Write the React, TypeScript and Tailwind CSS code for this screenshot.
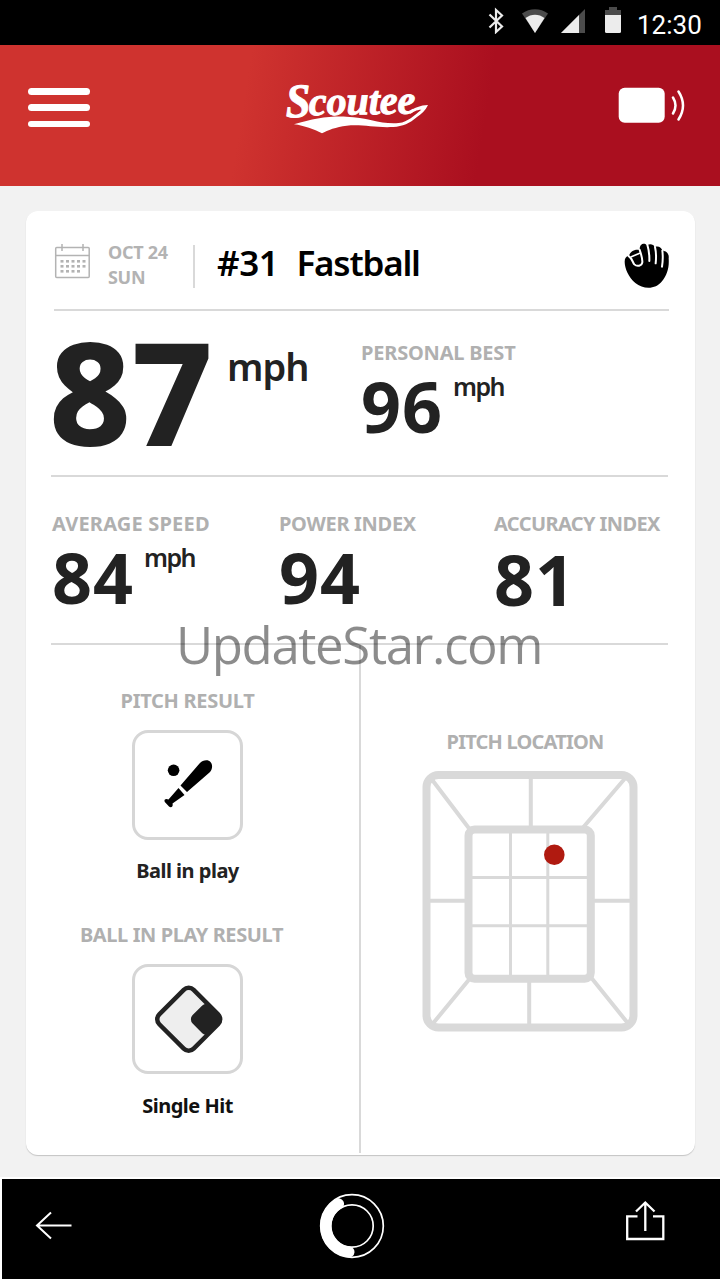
import type { ReactNode } from "react";

function StatusBar() {
  return (
    <div className="flex h-[45px] items-start bg-black pl-[488px] text-white">
      <svg className="mt-[7px]" width="134" height="27" viewBox="488 7 134 27">
        <path
          d="M489.500 14.500l12.500 12-6 5.500v-22l6 5.500-12.500 12"
          fill="none"
          stroke="#ececec"
          strokeWidth="2.200"
        />
        <path d="M522 13.500c7.500-5.700 18.500-5.700 26 0L535 33z" fill="#4b4b4b" />
        <path d="M525.500 18c5.500-4.500 13.500-4.500 19 0L535 33z" fill="#ececec" />
        <path d="M585 9v24h-24z" fill="#4b4b4b" />
        <path d="M579 15v18h-18z" fill="#ececec" />
        <path d="M605 15v-5h4V7h8v3h4v5z" fill="#4b4b4b" />
        <path d="M605 15h16v16.500q0 1.500-1.500 1.500h-13q-1.500 0-1.500-1.500z" fill="#ececec" />
      </svg>
      <span className="ml-[15px] mt-3 font-['Roboto'] text-[26px] leading-[26px]">
        12:30
      </span>
    </div>
  );
}

function Logo() {
  return (
    <svg width="157" height="67" viewBox="115 15 471 201" fill="#fff">
      <g
        fontFamily="'Liberation Serif', serif"
        fontStyle="italic"
        fontWeight="700"
        stroke="#fff"
        strokeWidth="3"
        transform="rotate(-1 140 140)"
      >
        <text x="139" y="142" fontSize="144" textLength="74" lengthAdjust="spacingAndGlyphs">
          S
        </text>
        <text x="208" y="137" fontSize="122" textLength="320" lengthAdjust="spacingAndGlyphs">
          coutee
        </text>
      </g>
      <path d="M163 163C220 146 265 138 320 140C385 142 425 164 477 159C506 155 522 137 545 119C530 119 520 126 512 132L510 124C525 113 542 106 565 105C558 121 545 132 531 142C511 160 489 170 461 171C405 174 369 162 321 167C289 171 264 180 247 190C222 178 195 167 163 163Z" />
    </svg>
  );
}

function Header() {
  return (
    <header className="flex h-[141px] items-start bg-[linear-gradient(99deg,#cf332f_34%,#aa0f1f_67%)] pl-7">
      <div className="mt-[43px] flex w-[62px] flex-col gap-[9.5px]">
        <div className="h-[6.8px] rounded-full bg-white" />
        <div className="h-[6.8px] rounded-full bg-white" />
        <div className="h-[6.8px] rounded-full bg-white" />
      </div>
      <div className="ml-[188px] mt-[30px]">
        <Logo />
      </div>
      <svg className="ml-[183px] mt-[41px]" width="68" height="38" viewBox="618 86 68 38">
        <rect x="618.700" y="87.700" width="46" height="35" rx="6" fill="#fff" />
        <path
          d="M673 97.500q5 8 0 16M678.500 91.500q9 14 0 28"
          fill="none"
          stroke="#fff"
          strokeWidth="2.500"
          strokeLinecap="round"
        />
      </svg>
    </header>
  );
}

function CalendarIcon() {
  const dots = [
    [61, 261], [66.5, 261], [72, 261], [77.5, 261], [83, 261],
    [61, 266], [66.5, 266], [72, 266], [77.5, 266], [83, 266],
    [61, 271], [66.5, 271], [72, 271], [77.5, 271],
  ];
  return (
    <svg width="37" height="36" viewBox="54 243 37 36" fill="none" stroke="#b3b3b3">
      <rect x="55.700" y="247.500" width="33.500" height="30" rx="1" strokeWidth="1.500" />
      <path d="M55.500 255.500h34M62 244v7M83 244v7" strokeWidth="1.500" />
      {dots.map(([x, y]) => (
        <rect key={`${x}-${y}`} x={x - 0.5} y={y - 1} width="3" height="2.600" fill="#b3b3b3" stroke="none" />
      ))}
    </svg>
  );
}

function GloveIcon() {
  return (
    <svg width="46" height="46" viewBox="20 18 138 138">
      <path
        d="M22 74C22 63 27 57 35 58C37 45 50 36 67 39C66 17 84 17 89 25C98 19 109 22 112 30C124 26 133 32 135 41C148 41 156 51 154 64C156 92 149 114 134 133C115 158 78 158 54 138C34 121 22 94 22 74Z"
        fill="#000"
      />
      <g fill="none" stroke="#fff" strokeWidth="6" strokeLinecap="round">
        <path d="M90 23Q97 46 96 72" />
        <path d="M113 30Q118 52 115 79" />
        <path d="M135 41Q138 64 134 89" />
        <path d="M35 58C44 64 46 76 51 82C59 90 73 87 75 76C76 64 71 52 67 38" />
        <path d="M42 59L67 49" strokeWidth="5" />
      </g>
    </svg>
  );
}

function BatIcon() {
  return (
    <svg width="105" height="104" viewBox="135 733 105 104">
      <circle cx="173.600" cy="770.300" r="5.800" />
      <path d="M180.500 785.500L199.500 763.500C203 759.500 208.500 759.500 210.500 762C213 765 212.500 769.500 209.500 772.500L187 792Z" />
      <path d="M178.500 788L184.500 795L172.500 803.500C173.500 806.500 171 808.500 169 806.500L164.800 802C163.500 799.500 166 798 168.500 799.500Z" />
    </svg>
  );
}

function DiamondIcon() {
  return (
    <svg width="105" height="104" viewBox="135 967 105 104">
      <g transform="rotate(45 188.700 1019.300)">
        <rect x="164.400" y="995" width="48.600" height="48.600" rx="7" fill="#eee" stroke="#222" strokeWidth="4.500" />
      </g>
      <rect x="193.700" y="1006.500" width="25.600" height="25.600" rx="6" fill="#222" transform="rotate(45 206.500 1019.300)" />
    </svg>
  );
}

function StrikeZone() {
  return (
    <svg width="216" height="261" viewBox="421.500 771 216 261" fill="none" stroke="#d9d9d9">
      <rect x="426" y="775" width="207" height="252.500" rx="12" strokeWidth="8" />
      <rect x="468" y="829.500" width="122.300" height="149.200" rx="6" strokeWidth="8" />
      <g strokeWidth="3">
        <path d="M510 830v149M547.300 830v149M469 877.500h121M469 925.700h121" />
      </g>
      <g strokeWidth="4">
        <path d="M530.300 776v52M528.700 980v46M427 900.700h40M592 900.700h40" />
        <path d="M431 779l38 50M624 779l-41 48M432 1024l37-45M628 1024l-37-46" />
      </g>
      <circle cx="553.800" cy="854.800" r="10.300" fill="#b01a10" stroke="none" />
    </svg>
  );
}

function Label({ className, children }: { className: string; children: ReactNode }) {
  return (
    <div className={`whitespace-nowrap text-[20px] font-bold leading-5 text-[#b0b0b0] ${className}`}>
      {children}
    </div>
  );
}

function Tile({ children }: { children: ReactNode }) {
  return (
    <div className="mt-[19px] h-[110px] w-[111px] rounded-2xl border-[3px] border-[#d6d6d6]">
      {children}
    </div>
  );
}

function Stat({ label, value, unit }: { label: ReactNode; value: string; unit?: string }) {
  return (
    <div>
      {label}
      <div className="mt-2 flex items-start">
        <span className="text-[70px] font-bold leading-[70px] tracking-[1px]">{value}</span>
        {unit && (
          <span className="ml-2.5 mt-[3px] text-[25px] font-semibold leading-[25px] tracking-[-1.6px]">
            {unit}
          </span>
        )}
      </div>
    </div>
  );
}

function PitchCard() {
  return (
    <section className="relative ml-[26px] mt-[25px] h-[944px] w-[669px] rounded-xl bg-white text-[#222] shadow-[0_1px_1px_#c4c4c4]">
      <div className="ml-7 flex h-[100px] w-[615px] items-start border-b-2 border-[#d9d9d9]">
        <div className="mt-8 shrink-0">
          <CalendarIcon />
        </div>
        <div className="ml-[17px] mt-[29px] w-[85px] shrink-0 text-[18px] font-bold leading-[25px] tracking-[-0.3px] text-[#b3b3b3]">
          OCT 24
          <br />
          SUN
        </div>
        <div className="mt-[34px] h-[43px] w-0.5 shrink-0 bg-[#d9d9d9]" />
        <h1 className="ml-[22px] mt-[34px] flex w-[407px] shrink-0 gap-[18px] text-[35px] font-semibold leading-[35px] text-black">
          <span className="tracking-[-0.4px]">#31</span>
          <span className="tracking-[-1.2px]">Fastball</span>
        </h1>
        <div className="mt-8 shrink-0">
          <GloveIcon />
        </div>
      </div>

      <div className="ml-[25px] flex h-[166px] w-[617px] items-start border-b-2 border-[#d9d9d9]">
        <div className="flex w-[310px] items-start">
          <span className="-ml-0.5 mt-[9px] w-[168px] text-[142px] font-extrabold leading-[142px]">87</span>
          <span className="ml-2.5 mt-9 text-[38px] font-semibold leading-[38px] tracking-[-1px]">
            mph
          </span>
        </div>
        <div className="mt-8">
          <Stat label={<Label className="tracking-[-0.2px]">PERSONAL BEST</Label>} value="96" unit="mph" />
        </div>
      </div>

      <div className="ml-[25px] flex h-[168px] w-[617px] items-start border-b-2 border-[#d9d9d9] pt-[37px]">
        <div className="ml-px w-[227px]">
          <Stat label={<Label className="tracking-[0.2px]">AVERAGE SPEED</Label>} value="84" unit="mph" />
        </div>
        <div className="w-[215px]">
          <Stat label={<Label className="tracking-[-0.3px]">POWER INDEX</Label>} value="94" />
        </div>
        <Stat label={<Label className="mb-2.5 tracking-[-0.6px]">ACCURACY INDEX</Label>} value="81" />
      </div>

      <div className="flex h-[510px]">
        <div className="flex w-[333px] flex-col items-center pr-2.5 pt-[46px]">
          <Label className="tracking-[-0.3px]">PITCH RESULT</Label>
          <Tile>
            <BatIcon />
          </Tile>
          <div className="mb-11 mt-[21px] text-[20px] font-bold leading-5 tracking-[-0.5px]">Ball in play</div>
          <Label className="mr-3 tracking-[-0.4px]">BALL IN PLAY RESULT</Label>
          <Tile>
            <DiamondIcon />
          </Tile>
          <div className="mt-[22px] text-[20px] font-bold leading-5 tracking-[-0.5px] text-[#111]">Single Hit</div>
        </div>
        <div className="h-[508px] w-0.5 bg-[#d9d9d9]" />
        <div className="flex flex-1 flex-col items-center pt-[87px]">
          <div className="mb-[19px] mr-1.5">
            <Label className="tracking-[-0.8px]">PITCH LOCATION</Label>
          </div>
          <div className="ml-[3px]">
            <StrikeZone />
          </div>
        </div>
      </div>

      <div className="absolute left-[150px] top-[398px] whitespace-nowrap font-['Open_Sans'] text-[51px] leading-[70px] tracking-[-1.4px] text-black/45">
        UpdateStar.com
      </div>
    </section>
  );
}

function BottomBar() {
  return (
    <footer className="mt-[22px] flex h-[103px] items-start border-b border-l-2 border-t-2 border-white bg-black pl-[33px]">
      <svg className="mt-8" width="38" height="30" viewBox="35 1211 38 30" fill="none" stroke="#fff" strokeWidth="2">
        <path d="M71.500 1225.500H37M51 1212.500L37 1225.500L51 1238.500" />
      </svg>
      <svg className="ml-[246px] mt-[14px]" width="66" height="66" viewBox="319 1193 66 66" fill="none" stroke="#fff">
        <circle cx="352" cy="1226" r="31.300" strokeWidth="1.700" />
        <circle cx="352" cy="1226" r="21.200" strokeWidth="1.700" />
        <path d="M338.500 1203.800A26 26 0 0 0 349 1252" strokeWidth="11" strokeLinecap="round" />
      </svg>
      <svg className="ml-[240px] mt-[21px]" width="40" height="41" viewBox="625 1200 40 41" fill="none" stroke="#fff" strokeWidth="2.300">
        <path d="M637.500 1216.300H627.200V1239H663.300V1216.300H653M645.300 1231V1203M636 1211.500L645.300 1202.500L654.500 1211.500" />
      </svg>
    </footer>
  );
}

export default function App() {
  return (
    <div className="h-[1280px] w-[720px] overflow-hidden bg-[#f2f2f2] font-['Noto_Sans',sans-serif]">
      <StatusBar />
      <Header />
      <PitchCard />
      <BottomBar />
    </div>
  );
}
